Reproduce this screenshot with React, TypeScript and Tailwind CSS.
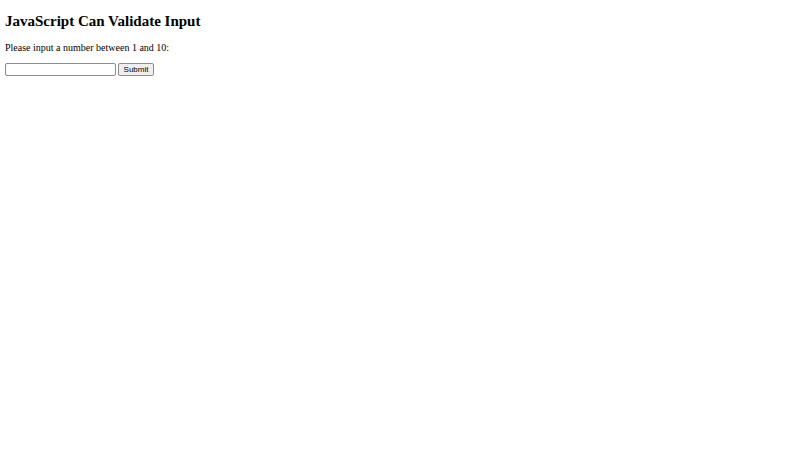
import { useState } from 'react'
import type { FormEvent } from 'react'

export default function App() {
  const [value, setValue] = useState('')
  const [message, setMessage] = useState('')

  function onSubmit(e: FormEvent) {
    e.preventDefault()
    const num = Number(value)
    if (value.trim() === '' || isNaN(num) || num < 1 || num > 10) {
      setMessage('Input not valid')
      return
    }
    setMessage('Input OK')
  }

  return (
    <main className="bg-white px-[5px] pt-3 font-['Liberation_Serif',serif] text-[10px] leading-3 text-black">
      <h2 className="text-[15px] leading-[18px] font-bold">JavaScript Can Validate Input</h2>
      <form onSubmit={onSubmit}>
        <label htmlFor="numb" className="mt-3 block">
          Please input a number between 1 and 10:
        </label>
        <div className="mt-[9px] flex items-center gap-0.5">
          <input
            id="numb"
            value={value}
            onChange={(e) => setValue(e.target.value)}
            className="h-[13px] w-[111px] rounded-[2px] border border-[#8c8c8c] bg-white px-px font-['Liberation_Sans',sans-serif] text-[8px] leading-[10px]"
          />
          <button
            type="submit"
            className="h-[13px] min-w-9 rounded-[2px] border border-[#8c8c8c] bg-[#efefef] px-1 font-['Liberation_Sans',sans-serif] text-[8px] leading-[11px]"
          >
            Submit
          </button>
        </div>
      </form>
      {message ? <p className="mt-[9px]">{message}</p> : null}
    </main>
  )
}
